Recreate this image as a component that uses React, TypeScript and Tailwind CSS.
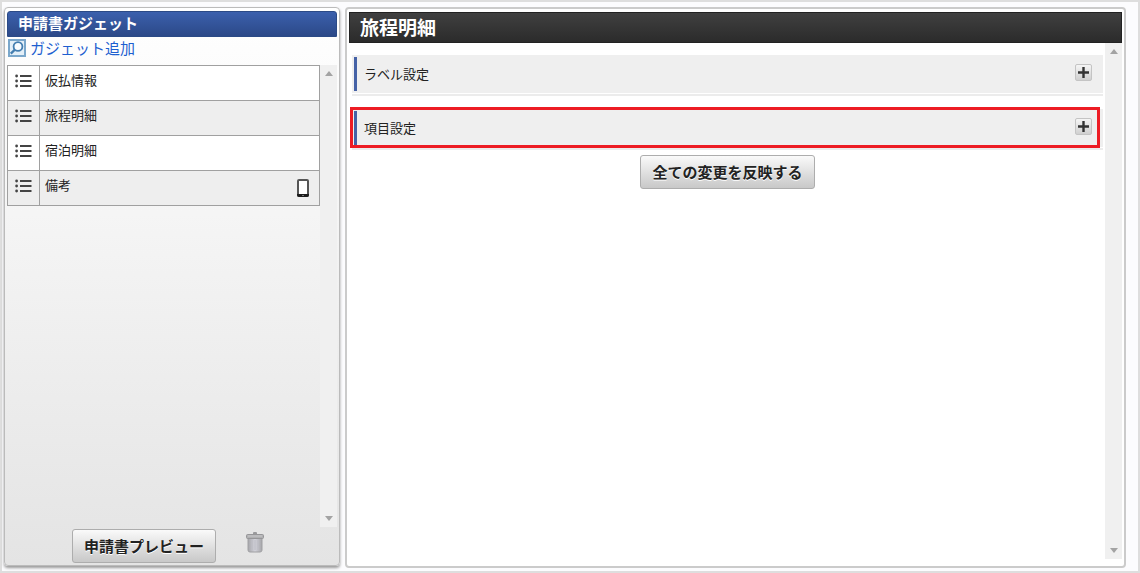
import { clsx } from 'clsx';
import { type ReactNode, useState } from 'react';

type Gadget = {
  id: string;
  name: string;
  mobile?: boolean;
};

const GADGETS: Gadget[] = [
  { id: 'advance', name: '仮払情報' },
  { id: 'itinerary', name: '旅程明細' },
  { id: 'lodging', name: '宿泊明細' },
  { id: 'remarks', name: '備考', mobile: true },
];

const SearchIcon = () => (
  <svg aria-hidden="true" className="size-[18px]" fill="none" viewBox="0 0 18 18">
    <rect fill="#e3eff8" height="16" stroke="#7aa7cb" strokeWidth="2" width="16" x="1" y="1" />
    <circle cx="10" cy="7.5" fill="#f8fcff" r="4.4" stroke="#447eb0" strokeWidth="1.8" />
    <path d="M7 10.5 2.8 14.6" stroke="#447eb0" strokeWidth="2.4" />
  </svg>
);

const ListIcon = () => (
  <svg aria-hidden="true" className="h-[14px] w-[17px]" viewBox="0 0 17 14">
    <g fill="#444">
      <circle cx="1.6" cy="2" r="1.4" />
      <circle cx="1.6" cy="7" r="1.4" />
      <circle cx="1.6" cy="12" r="1.4" />
      <rect height="2" width="11.5" x="5" y="1" />
      <rect height="2" width="11.5" x="5" y="6" />
      <rect height="2" width="11.5" x="5" y="11" />
    </g>
  </svg>
);

const PhoneIcon = () => (
  <svg aria-label="モバイル" className="h-[18px] w-3" role="img" viewBox="0 0 12 18">
    <rect fill="#555" height="18" rx="2" width="12" />
    <path d="M0 15h12v1a2 2 0 0 1-2 2H2a2 2 0 0 1-2-2z" fill="#1c1c1c" />
    <rect fill="#fff" height="13" width="8" x="2" y="2" />
    <rect fill="#777" height="1" width="2" x="5" y="16" />
  </svg>
);

const TrashIcon = () => (
  <svg aria-hidden="true" className="h-[21px] w-[18px]" viewBox="0 0 18 21">
    <defs>
      <linearGradient id="trash" x1="0" x2="1" y1="0" y2="0">
        <stop offset="0" stopColor="#a6a6aa" />
        <stop offset="0.5" stopColor="#d2d2da" />
        <stop offset="1" stopColor="#a6a6aa" />
      </linearGradient>
    </defs>
    <path d="M2 6h14v12.2a2 2 0 0 1-2 1.8H4a2 2 0 0 1-2-1.8z" fill="url(#trash)" stroke="#a0a0a3" />
    <path d="M6 8v10M9 8v10M12 8v10" stroke="#bcbcc4" />
    <rect fill="#9a9a9c" height="3" rx="1" width="4" x="7" y="0" />
    <rect fill="#b0b0b2" height="4" rx="1" stroke="#969698" width="17" x="0.5" y="2.5" />
    <path d="M2 4h14" stroke="#c8c8ca" />
  </svg>
);

const Scrollbar = () => (
  <div aria-hidden="true" className="flex w-[17px] shrink-0 flex-col items-center justify-between bg-[#f0f0f0] py-[6px]">
    <svg className="h-[5px] w-2" fill="#a3a3a3" viewBox="0 0 8 5">
      <path d="M0 5 4 0l4 5z" />
    </svg>
    <svg className="h-[5px] w-2" fill="#a3a3a3" viewBox="0 0 8 5">
      <path d="M0 0h8L4 5z" />
    </svg>
  </div>
);

const ActionButton = ({ children }: { children: ReactNode }) => (
  <button
    className="h-[34px] rounded-[3px] border border-[#adadad] bg-linear-to-b from-[#fafafa] to-[#c8c8c8] px-[11px] text-[15px] leading-5 font-bold text-[#222] [text-shadow:0_1px_0_#fff]"
    type="button"
  >
    {children}
  </button>
);

const GadgetRow = ({ gadget }: { gadget: Gadget }) => (
  <li className="flex h-[35px] border-b border-[#a0a0a0] bg-white even:bg-[#eeeeee]">
    <span className="flex w-8 shrink-0 justify-center border-r border-[#a0a0a0] pt-2">
      <ListIcon />
    </span>
    <span className="flex-1 pt-1 pl-[5px] text-[13px] leading-5">{gadget.name}</span>
    {gadget.mobile && (
      <span className="flex items-center pr-[10px]">
        <PhoneIcon />
      </span>
    )}
  </li>
);

const SettingSection = ({
  title,
  highlighted = false,
}: {
  title: string;
  highlighted?: boolean;
}) => {
  const [open, setOpen] = useState(false);

  return (
    <section className="relative border-b-2 border-[#ececec] pb-px">
      <div className="flex h-[38px] items-center bg-[#efefef] pl-[2px]">
        <span className="h-[34px] w-[3px] bg-[#4562a6]" />
        <h2 className="flex-1 pl-[7px] text-[13px] leading-5">{title}</h2>
        <button
          aria-expanded={open}
          aria-label={`${title}を開く`}
          className="mr-[11px] mb-[3px] flex size-[17px] items-center justify-center rounded-[2px] border border-[#c4c4c4] bg-linear-to-b from-[#f5f5f5] to-[#d0d0d0]"
          onClick={() => setOpen(!open)}
          type="button"
        >
          <svg aria-hidden="true" className="size-[11px]" viewBox="0 0 11 11">
            <path d="M5.5 0v11M0 5.5h11" stroke="#333" strokeWidth="2.4" />
          </svg>
        </button>
      </div>
      <span
        className={clsx(
          'pointer-events-none absolute -top-[2px] right-[3px] bottom-0 -left-[2px] border-3 border-[#ed1c24]',
          !highlighted && 'hidden',
        )}
      />
    </section>
  );
};

export default function App() {
  return (
    <main className="flex min-h-screen gap-[5px] border-2 border-[#dedede] bg-[#fcfcfe] pt-[5px] pr-3 pb-[3px] pl-[2px] font-['Noto_Sans_CJK_JP',sans-serif] text-[#222]">
      <aside className="mb-[2px] flex w-84 shrink-0 flex-col rounded-[4px] border border-[#bbb] bg-linear-to-b from-white to-[#e4e4e4] px-[2px] pt-[3px] pb-[2px] shadow-[0_2px_3px_#999]">
        <h2 className="h-[26px] rounded-t-[3px] border border-[#2b4a86] bg-linear-to-b from-[#3b60ad] to-[#2c4988] pl-[10px] text-[15px] leading-[22px] font-bold text-white">
          申請書ガジェット
        </h2>
        <a className="flex h-[22px] items-center gap-1 pl-px text-[15px] text-[#1d5fd0]" href="#add">
          <SearchIcon />
          ガジェット追加
        </a>
        <div className="mt-[6px] flex flex-1">
          <ul className="flex-1 self-start border border-b-0 border-[#a0a0a0]">
            {GADGETS.map((gadget) => (
              <GadgetRow gadget={gadget} key={gadget.id} />
            ))}
          </ul>
          <Scrollbar />
        </div>
        <div className="flex items-center justify-center gap-[30px] pt-[2px] pr-2">
          <ActionButton>申請書プレビュー</ActionButton>
          <button aria-label="削除" className="pb-2" type="button">
            <TrashIcon />
          </button>
        </div>
      </aside>

      <section className="flex flex-1 flex-col rounded-[4px] border-2 border-[#cbcbcb] bg-white px-[2px] pt-[3px] pb-[7px]">
        <h1 className="h-[31px] border border-[#222] bg-linear-to-b from-[#404040] to-[#2b2b2b] pl-[10px] text-[19px] leading-7 font-bold text-white">
          旅程明細
        </h1>
        <div className="flex flex-1">
          <div className="flex flex-1 flex-col gap-[13px] pt-3 pr-[2px] pl-[3px]">
            <SettingSection title="ラベル設定" />
            <SettingSection highlighted title="項目設定" />
            <div className="-mt-2 flex justify-center">
              <ActionButton>全ての変更を反映する</ActionButton>
            </div>
          </div>
          <Scrollbar />
        </div>
      </section>
    </main>
  );
}
